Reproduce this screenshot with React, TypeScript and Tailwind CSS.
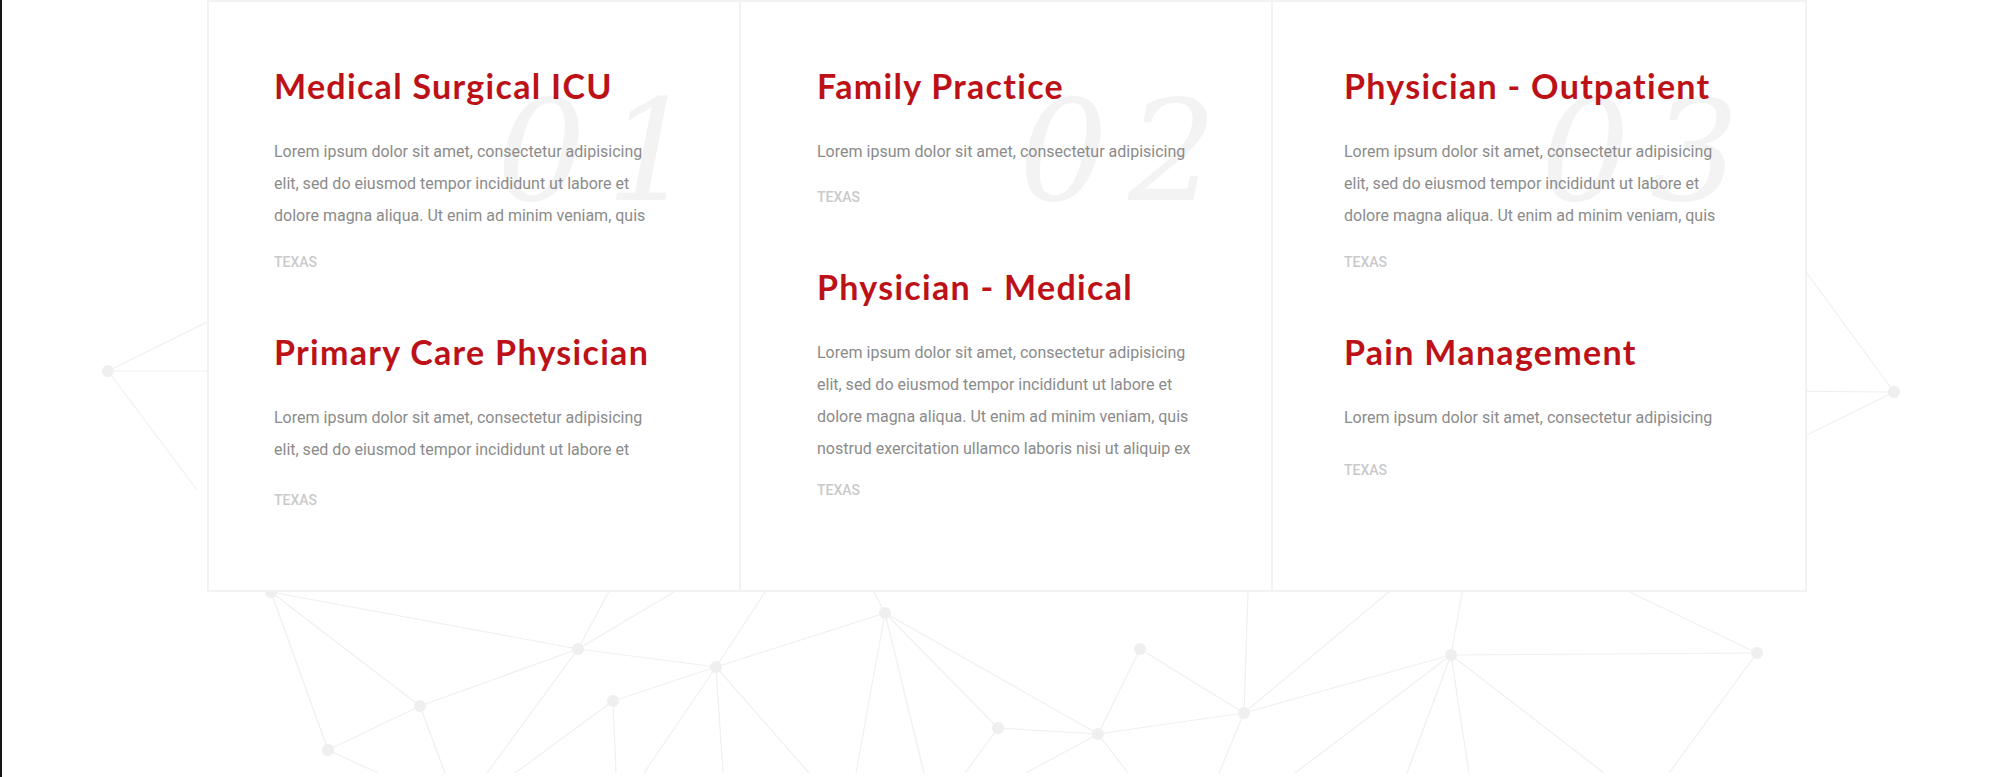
type Job = { title: string; lines: string[]; gap: string };

const columns: { num: string; pad: string; numPos: string; jobs: Job[] }[] = [
  {
    num: "01",
    pad: "pl-[65px]",
    numPos: "right-[24px]",
    jobs: [
      {
        title: "Medical Surgical ICU",
        gap: "mt-5",
        lines: [
          "Lorem ipsum dolor sit amet, consectetur adipisicing",
          "elit, sed do eiusmod tempor incididunt ut labore et",
          "dolore magna aliqua. Ut enim ad minim veniam, quis",
        ],
      },
      {
        title: "Primary Care Physician",
        gap: "mt-[24px]",
        lines: [
          "Lorem ipsum dolor sit amet, consectetur adipisicing",
          "elit, sed do eiusmod tempor incididunt ut labore et",
        ],
      },
    ],
  },
  {
    num: "02",
    pad: "pl-[76px]",
    numPos: "right-[34px]",
    jobs: [
      {
        title: "Family Practice",
        gap: "mt-[19px]",
        lines: ["Lorem ipsum dolor sit amet, consectetur adipisicing"],
      },
      {
        title: "Physician - Medical",
        gap: "mt-[15px]",
        lines: [
          "Lorem ipsum dolor sit amet, consectetur adipisicing",
          "elit, sed do eiusmod tempor incididunt ut labore et",
          "dolore magna aliqua. Ut enim ad minim veniam, quis",
          "nostrud exercitation ullamco laboris nisi ut aliquip ex",
        ],
      },
    ],
  },
  {
    num: "03",
    pad: "pl-[71px]",
    numPos: "right-[46px]",
    jobs: [
      {
        title: "Physician - Outpatient",
        gap: "mt-5",
        lines: [
          "Lorem ipsum dolor sit amet, consectetur adipisicing",
          "elit, sed do eiusmod tempor incididunt ut labore et",
          "dolore magna aliqua. Ut enim ad minim veniam, quis",
        ],
      },
      {
        title: "Pain Management",
        gap: "mt-[26px]",
        lines: ["Lorem ipsum dolor sit amet, consectetur adipisicing"],
      },
    ],
  },
];

const nodes: [number, number][] = [
  [108, 371], [271, 592], [578, 649], [716, 667], [420, 706], [613, 701],
  [328, 750], [885, 613], [998, 728], [1140, 649], [1244, 713], [1098, 734],
  [1451, 655], [1757, 653], [1894, 392],
];

const lines: [number, number, number, number][] = [
  [108, 371, 260, 296], [108, 371, 260, 371], [108, 371, 197, 490],
  [271, 592, 578, 649], [271, 592, 328, 750], [271, 592, 420, 706],
  [578, 649, 716, 667], [578, 649, 626, 560], [578, 649, 728, 560],
  [578, 649, 420, 706], [578, 649, 487, 773],
  [420, 706, 328, 750], [420, 706, 445, 773], [328, 750, 378, 773],
  [716, 667, 786, 560], [716, 667, 885, 613], [716, 667, 613, 701],
  [716, 667, 644, 773], [716, 667, 723, 773], [716, 667, 809, 773],
  [613, 701, 515, 773], [613, 701, 616, 773],
  [885, 613, 857, 560], [885, 613, 856, 773], [885, 613, 924, 773],
  [885, 613, 998, 728], [885, 613, 1098, 734],
  [998, 728, 965, 773], [998, 728, 1098, 734],
  [1098, 734, 1140, 649], [1098, 734, 1244, 713], [1098, 734, 1026, 773],
  [1098, 734, 1128, 773], [1140, 649, 1244, 713],
  [1244, 713, 1249, 560], [1244, 713, 1427, 560], [1244, 713, 1451, 655],
  [1244, 713, 1219, 773],
  [1451, 655, 1468, 560], [1451, 655, 1757, 653], [1451, 655, 1295, 773],
  [1451, 655, 1407, 773], [1451, 655, 1469, 773], [1451, 655, 1604, 773],
  [1757, 653, 1563, 560], [1757, 653, 1669, 773],
  [1894, 392, 1760, 209], [1894, 392, 1760, 391], [1894, 392, 1760, 458],
];

function Network() {
  return (
    <svg className="absolute inset-0 h-full w-full" viewBox="2 0 2009 777" preserveAspectRatio="none">
      {lines.map(([x1, y1, x2, y2], i) => (
        <line key={i} x1={x1} y1={y1} x2={x2} y2={y2} stroke="#f0f0f0" strokeWidth="1.2" />
      ))}
      {nodes.map(([cx, cy], i) => (
        <circle key={i} cx={cx} cy={cy} r="6" fill="#efefef" />
      ))}
    </svg>
  );
}

export default function App() {
  return (
    <div className="flex h-[777px] w-full overflow-hidden bg-white">
      <div className="w-[2px] shrink-0 bg-[#161616]" />
      <div className="relative flex-1">
        <Network />
        <div className="relative ml-[205px] grid w-[1600px] grid-cols-3 border-2 border-[#f2f2f2] bg-white">
          {columns.map((col, ci) => (
            <div
              key={col.num}
              className={`relative flex flex-col gap-[60px] pt-[64px] pb-[80px] ${col.pad} ${ci < 2 ? "border-r-2 border-[#f2f2f2]" : ""}`}
            >
              <span
                className={`absolute top-[80px] ${col.numPos} font-['DejaVu_Serif',serif] text-[140px] leading-none italic tracking-[20px] text-[#f3f3f3] select-none`}
              >
                {col.num}
              </span>
              {col.jobs.map((job) => (
                <div key={job.title} className="relative">
                  <h3 className="font-['Lato',sans-serif] text-[34px] leading-[40px] font-bold tracking-[1.3px] whitespace-nowrap text-[#bd1118]">
                    {job.title}
                  </h3>
                  <p className="mt-[30px] font-['Roboto',sans-serif] text-base leading-8 whitespace-nowrap text-[#8b8b8b]">
                    {job.lines.map((l) => (
                      <span key={l} className="block">{l}</span>
                    ))}
                  </p>
                  <p className={`${job.gap} font-['Roboto',sans-serif] text-sm leading-5 font-medium text-[#cacaca]`}>TEXAS</p>
                </div>
              ))}
            </div>
          ))}
        </div>
      </div>
    </div>
  );
}
